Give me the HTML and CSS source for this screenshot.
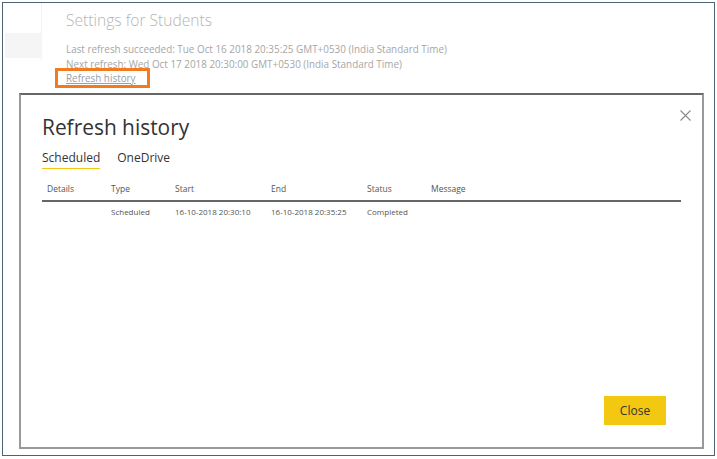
FILE: index.html
```html
<!DOCTYPE html>
<html lang="en">
<head>
<meta charset="utf-8">
<title>Refresh history</title>
<link rel="stylesheet" href="styles.css">
</head>
<body>
<div class="frame">
  <div class="top">
    <div class="rail"><div class="rail-block"></div></div>
    <div class="settings">
      <h1 class="settings-title">Settings for Students</h1>
      <p class="info">Last refresh succeeded: Tue Oct 16 2018 20:35:25 GMT+0530 (India Standard Time)</p>
      <p class="info">Next refresh: Wed Oct 17 2018 20:30:00 GMT+0530 (India Standard Time)</p>
      <span class="highlight"><a class="history-link">Refresh history</a></span>
    </div>
  </div>
  <div class="dialog">
    <div class="dialog-head">
      <h2 class="dialog-title">Refresh history</h2>
      <svg class="close-x" width="11" height="11" viewBox="0 0 11 11"><path d="M0.5 0.5 L10.5 10.5 M10.5 0.5 L0.5 10.5" stroke="#8a8a8a" stroke-width="1.1" fill="none"/></svg>
    </div>
    <div class="tabs">
      <span class="tab active">Scheduled</span>
      <span class="tab">OneDrive</span>
    </div>
    <table class="history">
      <colgroup><col class="c1"><col class="c2"><col class="c3"><col class="c4"><col class="c5"><col></colgroup>
      <thead>
        <tr><th>Details</th><th>Type</th><th>Start</th><th>End</th><th>Status</th><th>Message</th></tr>
      </thead>
      <tbody>
        <tr><td></td><td>Scheduled</td><td>16-10-2018 20:30:10</td><td>16-10-2018 20:35:25</td><td>Completed</td><td></td></tr>
      </tbody>
    </table>
    <div class="footer">
      <button class="close-btn">Close</button>
    </div>
  </div>
</div>
</body>
</html>
```
FILE: styles.css
```css
html, body {
  margin: 0;
  padding: 0;
  background: #ffffff;
}
body {
  font-family: "Open Sans", "Noto Sans", sans-serif;
}
.frame {
  margin: 2px;
  width: 713px;
  height: 454px;
  box-sizing: border-box;
  border: 1px solid #4d6177;
  display: flex;
  flex-direction: column;
  background: #fff;
}
.top {
  display: flex;
  height: 89px;
}
.rail {
  width: 39px;
  border-right: 1px solid #f2f2f2;
  height: 57px;
  padding-top: 30px;
  box-sizing: border-box;
}
.rail-block {
  margin-left: 2px;
  width: 37px;
  height: 25px;
  background: #f5f5f5;
}
.settings {
  padding-left: 24px;
  display: flex;
  flex-direction: column;
  align-items: flex-start;
}
.settings-title {
  margin: 6px 0 11px 0;
  font-size: 15.6px;
  font-weight: 300;
  color: #b4b4b4;
  line-height: 22px;
}
.info {
  margin: 0;
  font-size: 9.9px;
  line-height: 15px;
  color: #a6a6a6;
}
.highlight {
  margin-left: -11px;
  margin-top: -4px;
  padding: 0 11px 0 8px;
  border: 3px solid #f27a1f;
  height: 14px;
  display: flex;
  align-items: center;
}
.history-link {
  font-size: 9.9px;
  color: #9aa0a8;
  text-decoration: underline;
  line-height: 13px;
}
.dialog {
  margin: 1px 10px 6px 16px;
  flex: 1;
  border: 2px solid #999;
  border-top-color: #666;
  display: flex;
  flex-direction: column;
  padding: 0 21px;
}
.dialog-head {
  display: flex;
  justify-content: space-between;
  align-items: flex-start;
}
.dialog-title {
  margin: 17px 0 0 0;
  font-size: 20.9px;
  font-weight: 400;
  color: #333;
  line-height: 30px;
}
.close-x {
  margin-top: 15px;
  margin-right: -21px;
  position: relative;
  left: -11px;
}
.tabs {
  display: flex;
  gap: 17px;
  margin-top: 7px;
}
.tab {
  font-size: 12px;
  color: #333;
  line-height: 18px;
  padding-bottom: 1px;
}
.tab.active {
  border-bottom: 1.5px solid #f2c811;
}
.history {
  margin-top: 14px;
  border-collapse: collapse;
  width: 639px;
  table-layout: fixed;
}
.c1, .c2, .c5 { width: 64px; }
.c3, .c4 { width: 96px; }
.history th {
  text-align: left;
  font-weight: 400;
  font-size: 8.5px;
  color: #555;
  padding: 0 5px 5px 5px;
  border-bottom: 2px solid #666;
  line-height: 12px;
}
.history td {
  font-size: 8px;
  color: #555;
  padding: 4px 5px;
  line-height: 12px;
}
.footer {
  margin-top: auto;
  display: flex;
  justify-content: flex-end;
  padding: 0 15px 22px 0;
}
.close-btn {
  width: 62px;
  height: 29px;
  background: #f2c811;
  border: none;
  font-family: "Open Sans", "Noto Sans", sans-serif;
  font-size: 12px;
  color: #333;
  padding: 0;
}
```
